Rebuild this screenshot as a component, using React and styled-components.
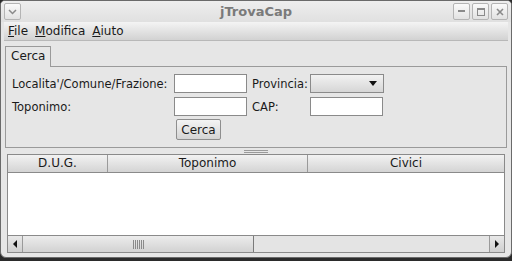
import React from "react";
import styled, { createGlobalStyle } from "styled-components";

const Global = createGlobalStyle`
  html, body { margin: 0; padding: 0; background: #2b2b2b; }
  body { font-family: "DejaVu Sans", sans-serif; font-size: 11.5px; color: #1a1a1a; }
`;

const Window = styled.div`
  width: 512px;
  height: 258px;
  box-sizing: border-box;
  background: #e6e6e6;
  border: 1px solid #6a6a6a;
  border-radius: 5px 5px 6px 6px;
  display: flex;
  flex-direction: column;
  overflow: hidden;
`;

const TitleBar = styled.div`
  height: 21px;
  display: grid;
  grid-template-columns: 1fr auto 1fr;
  align-items: center;
  padding: 0 3px;
  background: linear-gradient(#eeeeee, #e0e0e0);
`;

const ButtonGroup = styled.div`
  display: flex;
  justify-content: ${(p) => (p.$end ? "flex-end" : "flex-start")};
  gap: 2px;
`;

const Title = styled.div`
  font-weight: bold;
  font-size: 13px;
  color: #7a7a7a;
`;

const FrameButton = styled.div`
  width: 17px;
  height: 17px;
  box-sizing: border-box;
  border: 1px solid #b4b4b4;
  border-radius: 2px;
  background: linear-gradient(#fafafa, #e2e2e2);
  display: flex;
  align-items: center;
  justify-content: center;
`;

const MenuBar = styled.div`
  height: 18px;
  margin: 0 3px;
  display: flex;
  align-items: center;
  gap: 7px;
  padding-left: 4px;
  background: linear-gradient(#f4f4f4, #d2d2d2);
  border-bottom: 1px solid #b8b8b8;
`;

const MenuItem = styled.span`
  font-size: 12px;
`;

const Content = styled.div`
  flex: 1;
  display: flex;
  flex-direction: column;
  padding: 4px;
`;

const TabStrip = styled.div`
  display: flex;
  height: 21px;
`;

const Tab = styled.div`
  box-sizing: border-box;
  padding: 2px 5px 0;
  border: 1px solid #9a9a9a;
  border-bottom: none;
  background: #e6e6e6;
  font-size: 12px;
  position: relative;
  top: 1px;
`;

const TabPanel = styled.div`
  border: 1px solid #9a9a9a;
  padding: 5px 0 6px 5px;
  display: grid;
  grid-template-columns: 163px 77px 59px 74px;
  grid-auto-rows: 23px;
  align-items: center;
`;

const Label = styled.div`
  padding-left: 1px;
`;

const Input = styled.div`
  width: 73px;
  height: 19px;
  box-sizing: border-box;
  background: #fff;
  border: 1px solid #8a8a8a;
`;

const Combo = styled.div`
  width: 74px;
  height: 19px;
  box-sizing: border-box;
  border: 1px solid #8a8a8a;
  background: linear-gradient(#f2f2f2, #d6d6d6);
  display: flex;
  align-items: center;
  justify-content: flex-end;
  padding-right: 6px;
`;

const Button = styled.div`
  grid-column: 2;
  width: 45px;
  height: 21px;
  box-sizing: border-box;
  margin-left: 2px;
  border: 1px solid #8e8e8e;
  border-radius: 2px;
  background: linear-gradient(#f4f4f4, #d4d4d4);
  display: flex;
  align-items: center;
  justify-content: center;
  font-size: 12px;
`;

const Splitter = styled.div`
  height: 6px;
  display: flex;
  align-items: center;
  justify-content: center;
`;

const Grip = styled.div`
  width: 24px;
  height: 3px;
  border-top: 1px solid #9a9a9a;
  border-bottom: 1px solid #9a9a9a;
  box-sizing: border-box;
`;

const TableBox = styled.div`
  flex: 1;
  margin: 0 2px;
  border: 1px solid #8a8a8a;
  display: flex;
  flex-direction: column;
`;

const HeaderRow = styled.div`
  height: 17px;
  display: grid;
  grid-template-columns: 99px 200px 1fr;
  background: linear-gradient(#f2f2f2, #d4d4d4);
  border-bottom: 1px solid #8a8a8a;
`;

const HeaderCell = styled.div`
  border-left: ${(p) => (p.$first ? "none" : "1px solid #9a9a9a")};
  text-align: center;
  font-size: 12px;
  line-height: 17px;
`;

const Rows = styled.div`
  flex: 1;
  background: #fff;
`;

const ScrollBar = styled.div`
  height: 16px;
  display: flex;
  border-top: 1px solid #8a8a8a;
  background: #e4e4e4;
`;

const Arrow = styled.div`
  width: 15px;
  box-sizing: border-box;
  background: linear-gradient(#e8e8e8, #cfcfcf);
  border-right: ${(p) => (p.$left ? "1px solid #9a9a9a" : "none")};
  border-left: ${(p) => (p.$left ? "none" : "1px solid #9a9a9a")};
  display: flex;
  align-items: center;
  justify-content: center;
`;

const Track = styled.div`
  flex: 1;
  display: flex;
`;

const Thumb = styled.div`
  width: 231px;
  box-sizing: border-box;
  border-right: 1px solid #7a7a7a;
  background: linear-gradient(#ececec, #d2d2d2);
  display: flex;
  align-items: center;
  justify-content: center;
`;

const Ridges = styled.div`
  width: 11px;
  height: 9px;
  background: repeating-linear-gradient(90deg, #8a8a8a 0 1px, transparent 1px 2px);
`;

const Tri = ({ dir }) => (
  <svg width="6" height="8" viewBox="0 0 6 8">
    <path d={dir === "left" ? "M5 0 L1 4 L5 8 Z" : "M1 0 L5 4 L1 8 Z"} fill="#111" />
  </svg>
);

export default function App() {
  return (
    <>
      <Global />
      <Window>
        <TitleBar>
          <ButtonGroup>
            <FrameButton>
              <svg width="9" height="6" viewBox="0 0 9 6">
                <path d="M1 1 L4.5 4.5 L8 1" stroke="#8a8a8a" strokeWidth="1.5" fill="none" />
              </svg>
            </FrameButton>
          </ButtonGroup>
          <Title>jTrovaCap</Title>
          <ButtonGroup $end>
            <FrameButton>
              <svg width="7" height="3" viewBox="0 0 7 3">
                <rect x="0" y="0" width="7" height="2" fill="#8a8a8a" />
              </svg>
            </FrameButton>
            <FrameButton>
              <svg width="8" height="8" viewBox="0 0 8 8">
                <rect x="0.5" y="0.5" width="7" height="7" stroke="#8a8a8a" fill="none" />
                <rect x="0" y="0" width="8" height="2" fill="#8a8a8a" />
              </svg>
            </FrameButton>
            <FrameButton>
              <svg width="8" height="8" viewBox="0 0 8 8">
                <path d="M1 1 L7 7 M7 1 L1 7" stroke="#8a8a8a" strokeWidth="1.6" />
              </svg>
            </FrameButton>
          </ButtonGroup>
        </TitleBar>
        <MenuBar>
          <MenuItem><u>F</u>ile</MenuItem>
          <MenuItem><u>M</u>odifica</MenuItem>
          <MenuItem><u>A</u>iuto</MenuItem>
        </MenuBar>
        <Content>
          <TabStrip>
            <Tab>Cerca</Tab>
          </TabStrip>
          <TabPanel>
            <Label>Localita'/Comune/Frazione:</Label>
            <Input />
            <Label>Provincia:</Label>
            <Combo>
              <svg width="8" height="5" viewBox="0 0 8 5">
                <path d="M0 0 L8 0 L4 5 Z" fill="#111" />
              </svg>
            </Combo>
            <Label>Toponimo:</Label>
            <Input />
            <Label>CAP:</Label>
            <Input />
            <Button>Cerca</Button>
          </TabPanel>
          <Splitter>
            <Grip />
          </Splitter>
          <TableBox>
            <HeaderRow>
              <HeaderCell $first>D.U.G.</HeaderCell>
              <HeaderCell>Toponimo</HeaderCell>
              <HeaderCell>Civici</HeaderCell>
            </HeaderRow>
            <Rows />
            <ScrollBar>
              <Arrow $left><Tri dir="left" /></Arrow>
              <Track>
                <Thumb><Ridges /></Thumb>
              </Track>
              <Arrow><Tri dir="right" /></Arrow>
            </ScrollBar>
          </TableBox>
        </Content>
      </Window>
    </>
  );
}
